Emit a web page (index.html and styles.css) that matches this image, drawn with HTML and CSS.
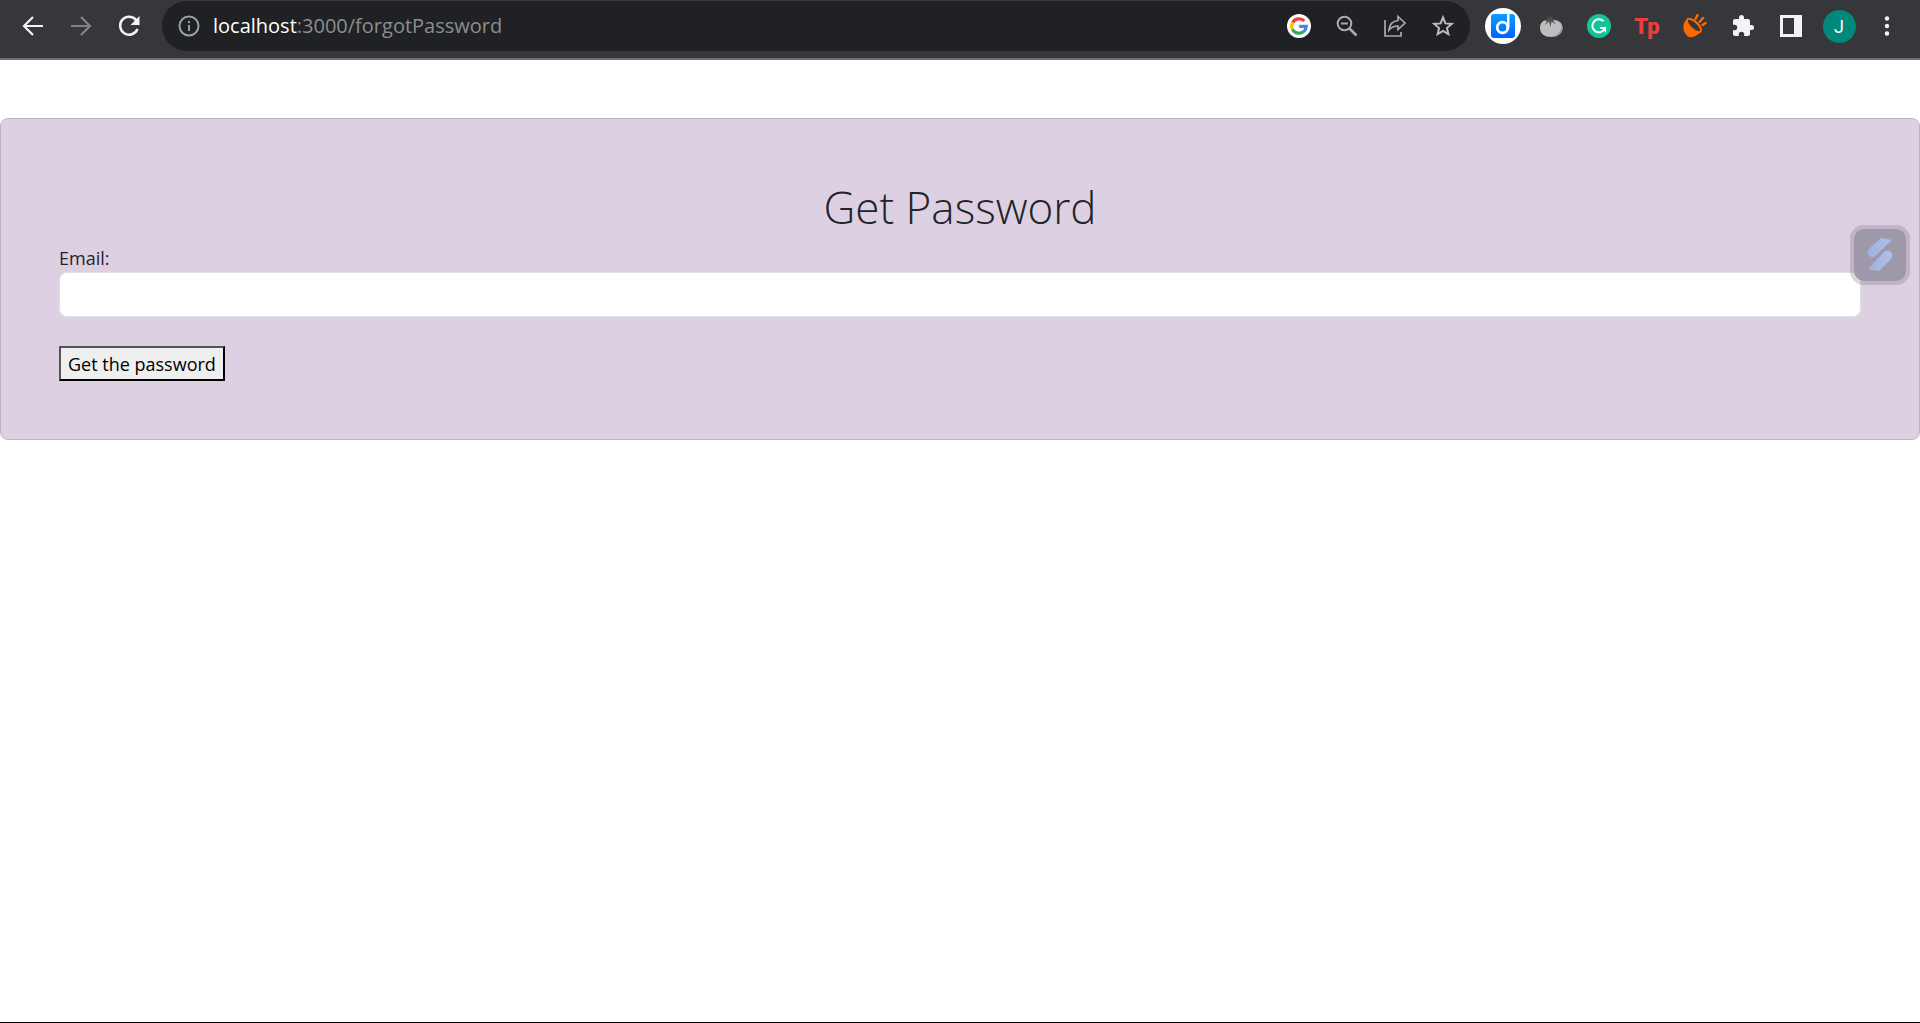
FILE: index.html
```html
<!DOCTYPE html>
<html lang="en">
<head>
<meta charset="utf-8">
<title>Get Password</title>
<link rel="stylesheet" href="styles.css">
</head>
<body>
<header class="toolbar">
  <button class="tool" type="button" aria-label="Back"><svg width="24" height="24" viewBox="0 0 24 24" fill="none" stroke="#f1f3f4" stroke-width="2.2"><path d="M22 12H3M12 3l-9 9 9 9"/></svg></button>
  <button class="tool" type="button" aria-label="Forward"><svg width="24" height="24" viewBox="0 0 24 24" fill="none" stroke="#828387" stroke-width="2.2"><path d="M2 12h19M12 3l9 9-9 9"/></svg></button>
  <button class="tool" type="button" aria-label="Reload"><svg width="24" height="24" viewBox="0 0 24 24" fill="none"><path d="M19.5 6.5A9 9 0 1 0 20.5 15" stroke="#f1f3f4" stroke-width="2.5"/><path d="M22.500 2v9h-9z" fill="#f1f3f4"/></svg></button>
  <div class="address">
    <svg class="info" width="22" height="22" viewBox="0 0 22 22" fill="none" stroke="#9aa0a6" stroke-width="2"><circle cx="11" cy="11" r="9.500"/><path d="M11 10v6M11 6v2"/></svg>
    <p class="url"><span class="host">localhost</span>:3000/forgotPassword</p>
    <button class="tool" type="button" aria-label="Google"><svg width="24" height="24" viewBox="0 0 24 24" fill="none" stroke-width="3.200"><circle cx="12" cy="12" r="12" fill="#fff"/><path d="M17.300 7A7.300 7.300 0 0 0 5.600 8.600" stroke="#ea4335"/><path d="M5.600 8.500a7.300 7.300 0 0 0 0 7" stroke="#fbbc05"/><path d="M5.600 15.400a7.300 7.300 0 0 0 11.200 2" stroke="#34a853"/><path d="M12.200 12.300h7.100a7.300 7.300 0 0 1-2.600 5.200" stroke="#4285f4"/></svg></button>
    <button class="tool" type="button" aria-label="Zoom"><svg width="22" height="22" viewBox="0 0 22 22" fill="none" stroke="#a9abae" stroke-width="2"><circle cx="8.500" cy="8.500" r="6.800"/><path d="M5 8.500h7"/><path d="M13.500 13.500l7 7" stroke-width="2.600"/></svg></button>
    <button class="tool" type="button" aria-label="Share"><svg width="24" height="24" viewBox="0 0 24 24" fill="none" stroke="#a9abae" stroke-width="1.700"><path d="M2 6v16h16v-4"/><path d="M15 2.500l7 6.500-7 6.500V12c-4 0-6.500 1-9 4 .6-5.500 3.500-9 9-9.500z"/></svg></button>
    <button class="tool" type="button" aria-label="Bookmark"><svg width="24" height="24" viewBox="0 0 24 24" fill="none" stroke="#b9bbbe" stroke-width="2"><path d="M12 3.500l2.400 5.900 6.400.5-4.900 4.100 1.500 6.200-5.400-3.300-5.400 3.300 1.500-6.200-4.900-4.100 6.400-.5z"/></svg></button>
  </div>
  <button class="tool" type="button" aria-label="Daily extension"><svg width="36" height="36" viewBox="0 0 36 36" fill="none"><defs><linearGradient id="blue" x2="0" y2="1"><stop stop-color="#0a9dff"/><stop offset="1" stop-color="#0062ff"/></linearGradient></defs><circle cx="18" cy="18" r="18" fill="#fff"/><rect x="6" y="6" width="24" height="24" rx="3" fill="url(#blue)"/><circle cx="17.500" cy="19.500" r="5.300" stroke="#fff" stroke-width="2.800"/><path d="M23.300 6v14" stroke="#fff" stroke-width="2.400"/></svg></button>
  <button class="tool" type="button" aria-label="Tomato timer"><svg width="24" height="24" viewBox="0 0 24 24"><path d="M1 14C1 8 5 5 12 5.500S23.500 8 23.500 14 18 23 12 23 1 20 1 14z" fill="#bdbdbd"/><path d="M22 9c2 6-2 12-9 13 6 0 11-3 10.500-9z" fill="#999"/><path d="M4 6l5-.5L8 2l3 2 1-3 1 4 6 .5-5 1 3 4-4.500-3L11.500 13 10 7.500 6 11l2-4z" fill="#505050"/></svg></button>
  <button class="tool" type="button" aria-label="Grammar checker"><svg width="24" height="24" viewBox="0 0 24 24" fill="none"><circle cx="12" cy="12" r="12" fill="#15c39a"/><path d="M16.500 7.200A6.500 6.500 0 1 0 18 14h-5" stroke="#fff" stroke-width="2"/><path d="M14 13h5v6z" fill="#fff"/></svg></button>
  <button class="tool tp" type="button">Tp</button>
  <button class="tool" type="button" aria-label="Lamp extension"><svg width="24" height="24" viewBox="0 0 24 24" fill="none"><path d="M4 5c-6 5-4 15 2 18 5 1 8-2 12-5z" fill="#ff6a00"/><ellipse cx="11" cy="11.500" rx="9" ry="3.800" transform="rotate(43 11 11.500)" fill="#36373a" stroke="#ff6a00" stroke-width="2"/><path d="M12.500 5l2-4M16.500 8l3.500-4M19.500 11l3-2" stroke="#ff6a00" stroke-width="2.400" stroke-linecap="round"/></svg></button>
  <button class="tool" type="button" aria-label="Extensions"><svg width="24" height="24" viewBox="0 0 24 24" fill="#f1f3f4"><path d="M20.500 11H19V7a2 2 0 0 0-2-2h-4V3.500a2.500 2.500 0 0 0-5 0V5H4a2 2 0 0 0-2 2v3.800h1.500a2.700 2.700 0 0 1 0 5.400H2V20a2 2 0 0 0 2 2h3.800v-1.500a2.700 2.700 0 0 1 5.400 0V22H17a2 2 0 0 0 2-2v-4h1.500a2.500 2.500 0 0 0 0-5z"/></svg></button>
  <button class="tool" type="button" aria-label="Side panel"><svg width="22" height="22" viewBox="0 0 22 22"><path d="M0 0h22v22H0zM3 3v16h11V3z" fill="#f1f3f4" fill-rule="evenodd"/></svg></button>
  <button class="tool" type="button" aria-label="Profile J"><span class="avatar">J</span></button>
  <button class="tool" type="button" aria-label="Menu"><svg width="24" height="24" viewBox="0 0 24 24" fill="#f1f3f4"><circle cx="12" cy="4.500" r="2.200"/><circle cx="12" cy="12" r="2.200"/><circle cx="12" cy="19.500" r="2.200"/></svg></button>
</header>
<main class="page">
  <form class="card">
    <h1 class="title">Get Password</h1>
    <label class="label" for="email">Email:</label>
    <input class="field" id="email" type="email">
    <button class="submit" type="button">Get the password</button>
    <button class="widget" type="button" aria-label="Assistant"><svg width="26" height="36" viewBox="0 0 26 36"><defs><linearGradient id="fold" x2="1" y2="0"><stop stop-color="#9eb1df"/><stop offset="1" stop-color="#b0c0e8"/></linearGradient></defs><path d="M14 1l11 2L7 20c-4 1-7-2-6-6 1-2 2-3 3-4z" fill="url(#fold)"/><path d="M12 34L1 32l16-17c5-3 9 0 8 5-1 2-2 3-3 4z" fill="url(#fold)"/></svg></button>
  </form>
</main>
</body>
</html>
```
FILE: styles.css
```css
* {
  box-sizing: border-box;
}

body {
  display: flex;
  flex-direction: column;
  min-height: 100vh;
  margin: 0;
  background: #fff;
  border-bottom: 1px solid #000;
  color: #212529;
  font-family: "Open Sans", "Noto Sans", sans-serif;
  font-size: 18px;
}

.toolbar {
  display: flex;
  align-items: center;
  height: 60px;
  padding: 0 9px 6px;
  background: #36373b;
  border-bottom: 2px solid #707072;
}

.tool {
  display: flex;
  flex: none;
  align-items: center;
  justify-content: center;
  width: 48px;
  height: 48px;
  padding: 0;
  border: 0;
  background: none;
}

.address {
  display: flex;
  flex: 1;
  align-items: center;
  height: 50px;
  margin: 0 9px;
  padding: 0 3px 0 16px;
  background: #202125;
  border-radius: 26px;
}

.info {
  flex: none;
}

.url {
  flex: 1;
  margin: 0 0 0 13px;
  color: #8b8e91;
  font-size: 20px;
  line-height: 24px;
}

.host {
  color: #fff;
}

.tp {
  color: #ef3e3a;
  font-family: Roboto, sans-serif;
  font-size: 22px;
  font-weight: 900;
}

.avatar {
  width: 33px;
  height: 33px;
  background: #00897b;
  border-radius: 50%;
  color: #fff;
  font-family: Roboto, sans-serif;
  font-size: 18px;
  line-height: 33px;
  text-align: center;
}

.page {
  padding-top: 58px;
}

.card {
  position: relative;
  display: flex;
  flex-direction: column;
  align-items: flex-start;
  padding: 58px;
  background: #ddd0e2;
  border: 1px solid #bfb3c4;
  border-radius: 8px;
}

.title {
  align-self: center;
  margin: 0 0 7px;
  font-size: 44px;
  font-weight: 300;
  line-height: 60px;
}

.label {
  line-height: 28px;
}

.field {
  width: 100%;
  height: 45px;
  padding: 8px 15px;
  background: #fff;
  border: 1px solid #dee2e6;
  border-radius: 8px;
  font: inherit;
}

.submit {
  height: 35px;
  margin-top: 29px;
  padding: 0 7px;
  background: #efefef;
  border: 2px outset #000;
  color: #000;
  font: inherit;
}

.widget {
  position: absolute;
  top: 106px;
  right: 9px;
  display: flex;
  align-items: center;
  justify-content: center;
  width: 60px;
  height: 60px;
  padding: 0;
  background: #9f98aa;
  background-clip: padding-box;
  border: 4px solid rgba(110, 95, 120, 0.25);
  border-radius: 14px;
}
```
